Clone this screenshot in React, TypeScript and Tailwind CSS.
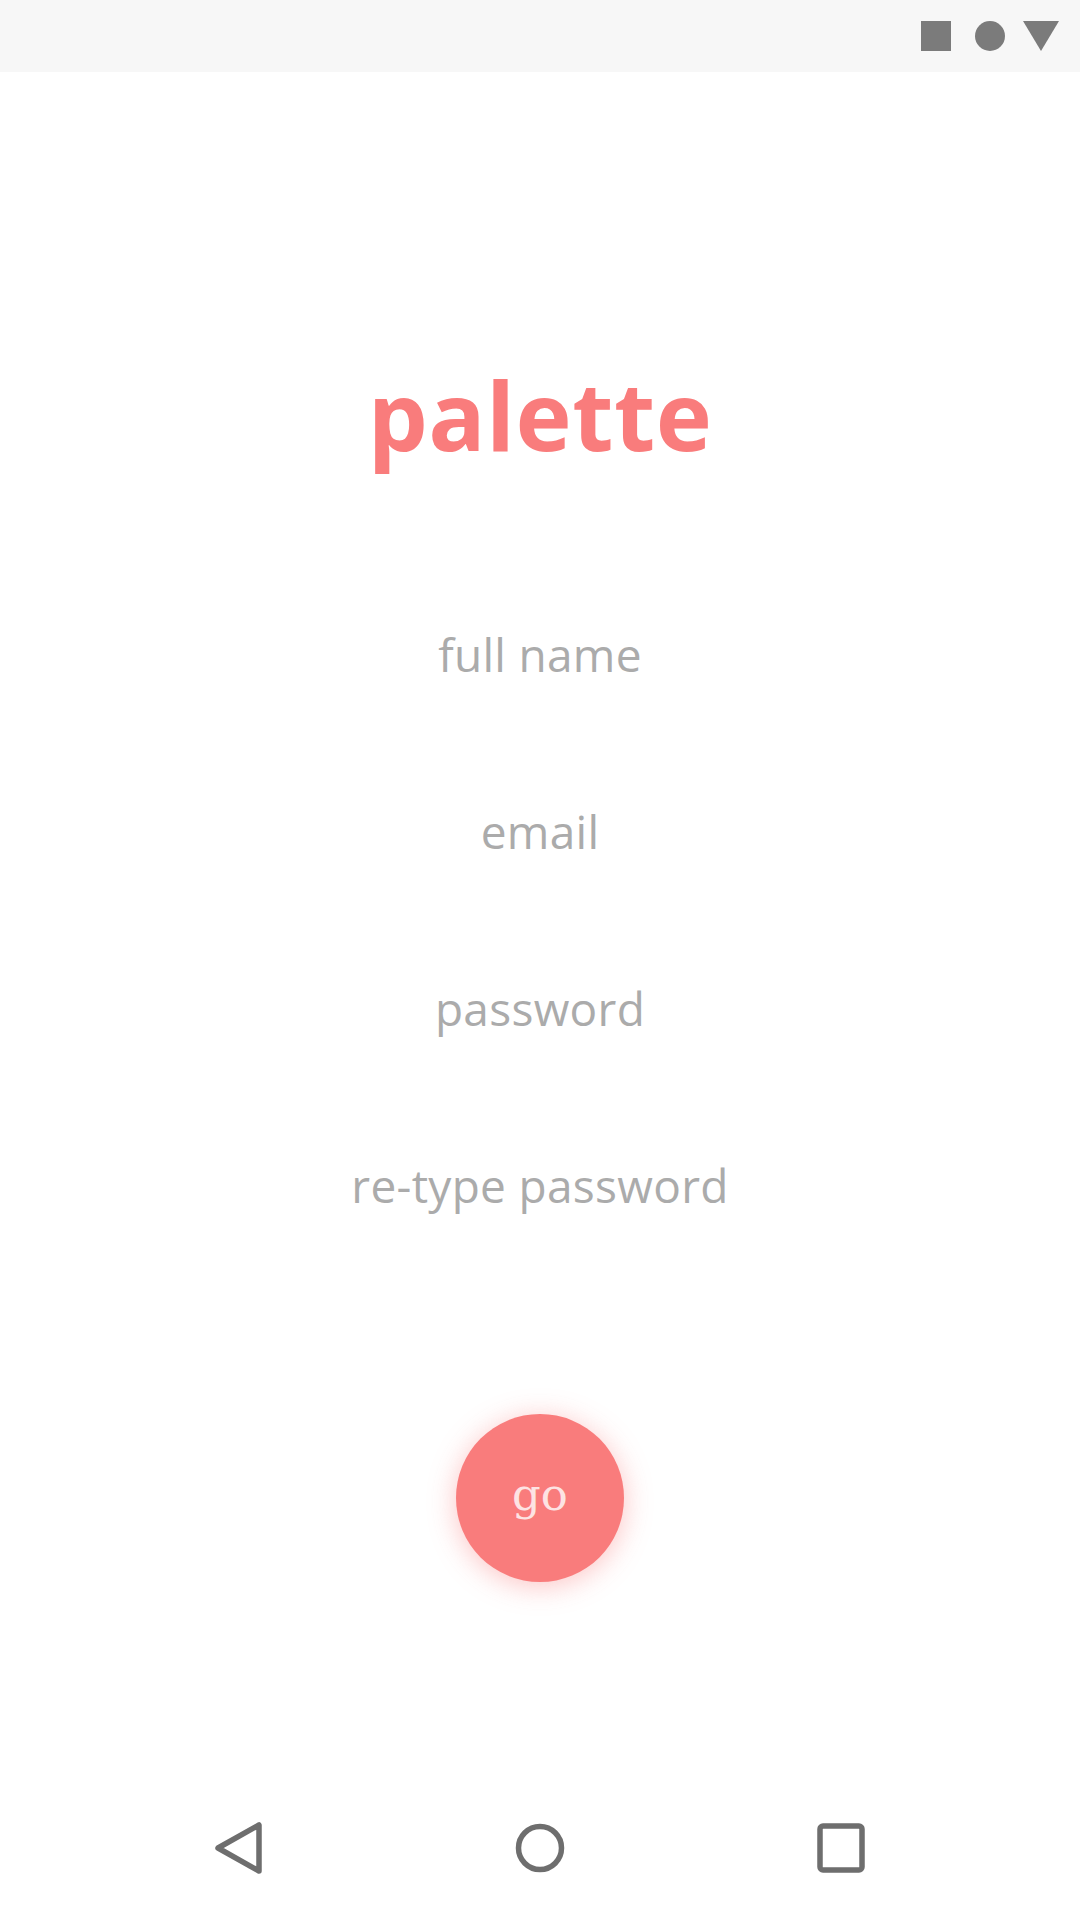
import { useState } from "react";

const fields = [
  { id: "name", label: "full name", type: "text" },
  { id: "email", label: "email", type: "email" },
  { id: "password", label: "password", type: "password" },
  { id: "confirm", label: "re-type password", type: "password" },
];

export default function App() {
  const [values, setValues] = useState<Record<string, string>>({});

  return (
    <div className="w-[1080px] h-[1920px] bg-white flex flex-col font-['Open_Sans',sans-serif]">
      {/* status bar */}
      <div className="h-[72px] shrink-0 bg-[#f7f7f7] flex items-center justify-end pr-[21px]">
        <div className="w-[30px] h-[30px] bg-[#7b7b7b]" />
        <div className="ml-[24px] w-[30px] h-[30px] rounded-full bg-[#7b7b7b]" />
        <svg className="ml-[18px]" width="36" height="30" viewBox="0 0 36 30">
          <path d="M0 0 H36 L18 30 Z" fill="#7b7b7b" />
        </svg>
      </div>

      <main className="flex-1 flex flex-col items-center">
        <h1 className="mt-[294px] text-[95px] leading-[96px] font-bold tracking-[0.5px] text-[#f97c7c]">
          palette
        </h1>

        <div className="mt-[162px] flex flex-col items-center gap-[117px]">
          {fields.map((f) => (
            <input
              key={f.id}
              type={f.type}
              placeholder={f.label}
              value={values[f.id] ?? ""}
              onChange={(e) => setValues({ ...values, [f.id]: e.target.value })}
              className="w-[600px] h-[60px] p-0 text-center text-[46px] leading-[60px] tracking-[0.3px] text-[#777] placeholder:text-[#ababab] bg-transparent outline-none"
            />
          ))}
        </div>

        <button className="mt-[199px] w-[168px] h-[168px] rounded-full bg-[#f97c7c] shadow-[0_4px_28px_rgba(249,124,124,0.45)] flex items-center justify-center text-[#fde3e3] text-[45px] leading-none font-['DejaVu_Serif',serif] pb-[8px]">
          go
        </button>
      </main>

      {/* nav bar */}
      <div className="h-[144px] shrink-0 flex items-center justify-between px-[214px]">
        <svg width="50" height="54" viewBox="0 0 50 54">
          <path d="M45 4 L45 50 L4 27 Z" fill="none" stroke="#6e6e6e" strokeWidth="5.5" strokeLinejoin="round" />
        </svg>
        <svg width="50" height="50" viewBox="0 0 50 50">
          <circle cx="25" cy="25" r="21.5" fill="none" stroke="#6e6e6e" strokeWidth="5.5" />
        </svg>
        <svg width="50" height="50" viewBox="0 0 50 50">
          <rect x="4" y="3" width="42" height="44" rx="3" fill="none" stroke="#6e6e6e" strokeWidth="5.5" />
        </svg>
      </div>
    </div>
  );
}
